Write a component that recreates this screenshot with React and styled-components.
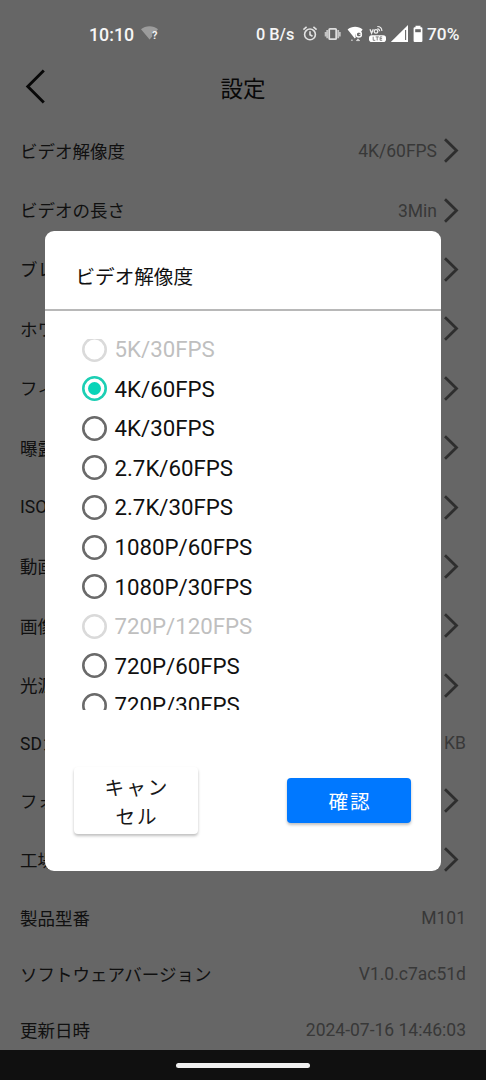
import { useState } from "react";
import { styled, createGlobalStyle } from "styled-components";

const settings = [
  { label: "ビデオ解像度", value: "4K/60FPS", link: true },
  { label: "ビデオの長さ", value: "3Min", link: true },
  { label: "ブレ補正", link: true },
  { label: "ホワイトバランス", link: true },
  { label: "フィルター", link: true },
  { label: "曝露補正", link: true },
  { label: "ISO", link: true },
  { label: "動画品質", link: true },
  { label: "画像品質", link: true },
  { label: "光源周波数", link: true },
  { label: "SDカード", value: "KB" },
  { label: "フォーマット", link: true },
  { label: "工場出荷設定", link: true },
  { label: "製品型番", value: "M101" },
  { label: "ソフトウェアバージョン", value: "V1.0.c7ac51d" },
  { label: "更新日時", value: "2024-07-16 14:46:03" },
];

const resolutions = [
  { name: "5K/30FPS", disabled: true },
  { name: "4K/60FPS" },
  { name: "4K/30FPS" },
  { name: "2.7K/60FPS" },
  { name: "2.7K/30FPS" },
  { name: "1080P/60FPS" },
  { name: "1080P/30FPS" },
  { name: "720P/120FPS", disabled: true },
  { name: "720P/60FPS" },
  { name: "720P/30FPS" },
];

const StatusIcons = () => (
  <svg width="122" height="20" viewBox="0 0 122 20" fill="none">
    {/* alarm */}
    <g stroke="#e2e2e2" strokeWidth="1.6">
      <circle cx="9" cy="10.4" r="5.4" />
      <path d="M9 7.200v3.600l2.500 1.500M2.400 5.600l3.200-2.700M15.600 5.600l-3.200-2.700" />
    </g>
    {/* vibrate */}
    <rect x="28.2" y="4.8" width="7" height="10.400" rx="0.8" stroke="#dedede" strokeWidth="1.8" />
    <path d="M26.200 6v8.200M37.200 6v8.200M24.600 8v4.400M38.800 8v4.400" stroke="#c4c4c4" strokeWidth="1.800" />
    {/* wifi */}
    <path d="M46.600 5.600C50.600 1.900 57.600 1.900 61.600 5.600L59.600 8.600C56.200 7.400 53.600 10 54.800 13.400L53.800 14.400Z" fill="#fff" />
    <circle cx="57.8" cy="10.4" r="2.6" stroke="#fff" strokeWidth="1.4" />
    <path d="M57.800 10.400h2.600M50 16.200h1.800M55.500 16.600l1.500-1.800 1.600 1.800z" stroke="#ddd" />
    {/* volte */}
    <path d="M69 5.200l1.600 4 1.700-4" stroke="#eee" strokeWidth="1.3" />
    <circle cx="75" cy="7.4" r="1.8" stroke="#eee" strokeWidth="1.3" />
    <path d="M76.400 4.600c1.400.2 2.200 1.200 2.300 2.600M76.300 2.500c2.700 0 4.500 1.900 4.600 4.500" stroke="#eee" strokeWidth="1.2" />
    <rect x="68" y="11.2" width="17" height="6.8" rx="2.8" fill="#fff" />
    <path d="M72.200 12.700v3.600h2.100M74.600 12.900h3.200M76.200 12.900v3.500M81.200 12.900h-2.100v3.400h2.100M79.100 14.600h2" stroke="#777" strokeWidth="0.9" />
    {/* signal */}
    <path d="M89.800 18L107 1v17z" fill="#fff" />
    <path d="M104.600 6v10" stroke="#666" strokeWidth="1.1" />
    {/* battery */}
    <path d="M114.500 1.700h5v1.600h.9a1 1 0 0 1 1 1v12.700a1 1 0 0 1-1 1h-6.800a1 1 0 0 1-1-1V4.300a1 1 0 0 1 1-1h.9z" fill="#fff" />
    <path d="M114.200 5.200h5.600v3h-5.600z" fill="#666" />
  </svg>
);

const App = () => {
  const [selected, setSelected] = useState("4K/60FPS");

  return (
    <>
      <GlobalStyle />
      <Screen>
        <StatusBar>
          <Clock>10:10</Clock>
          <svg width="18" height="16" viewBox="0 0 18 16">
            <path d="M0 3.200C4.500-.7 12.500-.7 17 3.200L15 5.700H11.200V10.600L8.600 13.600Z" fill="#9c9c9c" />
            <text x="11" y="13" fill="#f2f2f2" fontFamily="Roboto, sans-serif" fontWeight="700" fontSize="11">?</text>
          </svg>
          <Speed>0 B/s</Speed>
          <StatusIcons />
          <Battery>70%</Battery>
        </StatusBar>
        <Header>
          <svg width="22" height="36" viewBox="0 0 22 36">
            <path d="M18.800 1.500L2.800 17.500L18.800 33.500" fill="none" stroke="#080808" strokeWidth="2.900" />
          </svg>
          <Title>設定</Title>
        </Header>
        <List>
          {settings.map((item) => (
            <Row key={item.label} $link={item.link}>
              <Label>{item.label}</Label>
              <Value>{item.value}</Value>
              {item.link && (
                <svg width="16" height="26" viewBox="0 0 16 26">
                  <path d="M2 2.300L13.500 13.500L2 24.700" fill="none" stroke="#2e2e2e" strokeWidth="2.800" />
                </svg>
              )}
            </Row>
          ))}
        </List>
        <NavBar>
          <Handle />
        </NavBar>
        <Overlay>
          <Dialog role="dialog">
            <DialogTitle>ビデオ解像度</DialogTitle>
            <Options>
              {resolutions.map(({ name, disabled }) => (
                <Option
                  key={name}
                  disabled={disabled}
                  onClick={() => setSelected(name)}
                >
                  <Radio $checked={selected === name} $disabled={disabled} />
                  {name}
                </Option>
              ))}
            </Options>
            <Actions>
              <Button>キャン<br />セル</Button>
              <Button $primary>確認</Button>
            </Actions>
          </Dialog>
        </Overlay>
      </Screen>
    </>
  );
};

export default App;

const GlobalStyle = createGlobalStyle`
  * {
    box-sizing: border-box;
  }
  body {
    margin: 0;
    font-family: Roboto, "Noto Sans CJK JP", sans-serif;
  }
  svg {
    display: block;
    flex-shrink: 0;
  }
`;

const Screen = styled.div`
  position: relative;
  display: flex;
  flex-direction: column;
  width: 486px;
  height: 1080px;
  overflow: hidden;
  background-color: #666;
`;

const StatusBar = styled.div`
  display: flex;
  align-items: center;
  flex-shrink: 0;
  height: 54px;
  padding: 14px 0 0 89px;
  color: #f6f6f6;
  font-size: 17.5px;
  white-space: nowrap;
`;

const Clock = styled.span`
  width: 52px;
  font-size: 17.8px;
  font-weight: 500;
`;

const Speed = styled.span`
  width: 45px;
  margin-left: 97px;
  font-weight: 500;
  font-size: 16.3px;
`;

const Battery = styled.span`
  margin-left: 4px;
  font-size: 17.3px;
  font-weight: 500;
`;

const Header = styled.header`
  display: grid;
  grid-template-columns: 60px 1fr 60px;
  align-items: center;
  flex-shrink: 0;
  height: 66.5px;
  padding: 0 0 1px;

  svg {
    margin-left: 25px;
  }
`;

const Title = styled.h1`
  margin: 0;
  color: #080808;
  font-size: 22.5px;
  font-weight: 400;
  text-align: center;
`;

const List = styled.div`
  flex: 1;
  min-height: 0;
  overflow: hidden;
`;

const Row = styled.div`
  display: flex;
  align-items: center;
  height: ${(props) => (props.$link ? "59.4px" : "56px")};
  padding: 0 ${(props) => (props.$link ? "27px" : "20px")} 0 20px;
`;

const Label = styled.span`
  flex: 1;
  color: #101010;
  font-size: 17.5px;
`;

const Value = styled.span`
  margin-right: 6px;
  padding-top: 2px;
  color: #383838;
  font-size: 17.5px;

  &:last-child {
    margin-right: 0;
  }
`;

const NavBar = styled.div`
  display: flex;
  justify-content: center;
  align-items: center;
  flex-shrink: 0;
  height: 30px;
  background-color: #101010;
`;

const Handle = styled.div`
  width: 134px;
  height: 5px;
  border-radius: 3px;
  background-color: #f0f0f0;
`;

const Overlay = styled.div`
  position: absolute;
  inset: 0;
  display: flex;
  justify-content: center;
  align-items: flex-start;
  padding-top: 230.5px;
`;

const Dialog = styled.div`
  display: flex;
  flex-direction: column;
  width: 396px;
  height: 640.5px;
  border-radius: 9px;
  background-color: #fff;
`;

const DialogTitle = styled.h2`
  display: flex;
  align-items: center;
  height: 80px;
  margin: 0;
  padding: 12px 30.5px 0;
  border-bottom: 2px solid #b8b8b8;
  color: #101010;
  font-size: 19.6px;
  font-weight: 400;
`;

const Options = styled.div`
  display: flex;
  flex-direction: column;
  flex-shrink: 0;
  height: 371px;
  margin-top: 28px;
  padding-left: 36.5px;
  overflow: hidden;

  /* list is scrolled down a little */
  & > :first-child {
    margin-top: -9px;
  }
`;

const Option = styled.button`
  display: flex;
  align-items: center;
  gap: 8px;
  flex-shrink: 0;
  height: 39.55px;
  padding: 0;
  border: none;
  background: none;
  color: ${(props) => (props.disabled ? "#bfbfbf" : "#101010")};
  font-family: inherit;
  font-size: 22.25px;
`;

const Radio = styled.span`
  display: flex;
  justify-content: center;
  align-items: center;
  width: 25px;
  height: 25px;
  border-radius: 50%;
  box-shadow: inset 0 0 0 2.6px ${(props) => (props.$checked ? "#1ccfb4" : props.$disabled ? "#dadada" : "#6a6a6a")};

  &::after {
    content: "";
    width: 13px;
    height: 13px;
    border-radius: 50%;
    background-color: ${(props) => (props.$checked ? "#08d4b8" : "transparent")};
  }
`;

const Actions = styled.div`
  display: flex;
  justify-content: space-between;
  align-items: center;
  margin-top: 57px;
  padding: 0 30px 0 29px;
`;

const Button = styled.button`
  width: 124px;
  height: ${(props) => (props.$primary ? "45px" : "67px")};
  padding: 5px 0 0 2px;
  border: none;
  border-radius: 4px;
  background-color: ${(props) => (props.$primary ? "#0078ff" : "#fff")};
  box-shadow: 0 2px 3px rgba(0, 0, 0, 0.25);
  color: ${(props) => (props.$primary ? "#fff" : "#181818")};
  font-family: inherit;
  font-size: 19.6px;
  line-height: 29px;
  letter-spacing: 2px;
`;
